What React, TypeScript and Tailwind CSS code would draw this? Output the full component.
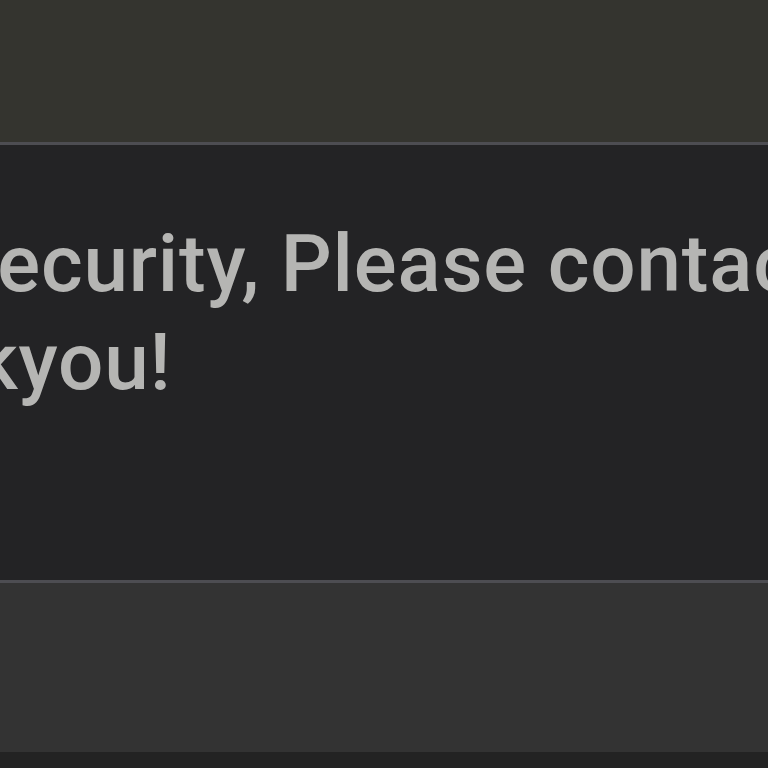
export default function App() {
  return (
    <div className="h-[768px] w-[768px] overflow-hidden bg-[#333331] flex flex-col">
      {/* dialog header strip */}
      <div className="h-[142px] shrink-0 bg-[#34342f]" />

      {/* message body */}
      <div className="h-[441px] shrink-0 border-y-[3px] border-[#4d4d52] bg-[#232325] overflow-hidden">
        <div
          className="mt-[70px] ml-[-52px] text-[#b5b5b3] text-[80px] leading-[98px] font-medium tracking-[0.8px] whitespace-nowrap"
          style={{ fontFamily: 'Roboto, "DejaVu Sans", sans-serif' }}
        >
          <p>Security, Please contact</p>
          <p className="ml-[-156px]">Thankyou!</p>
        </div>
      </div>

      {/* button row */}
      <div className="h-[169px] shrink-0 bg-[#333333]" />
      <div className="flex-1 bg-[#232323]" />
    </div>
  );
}
